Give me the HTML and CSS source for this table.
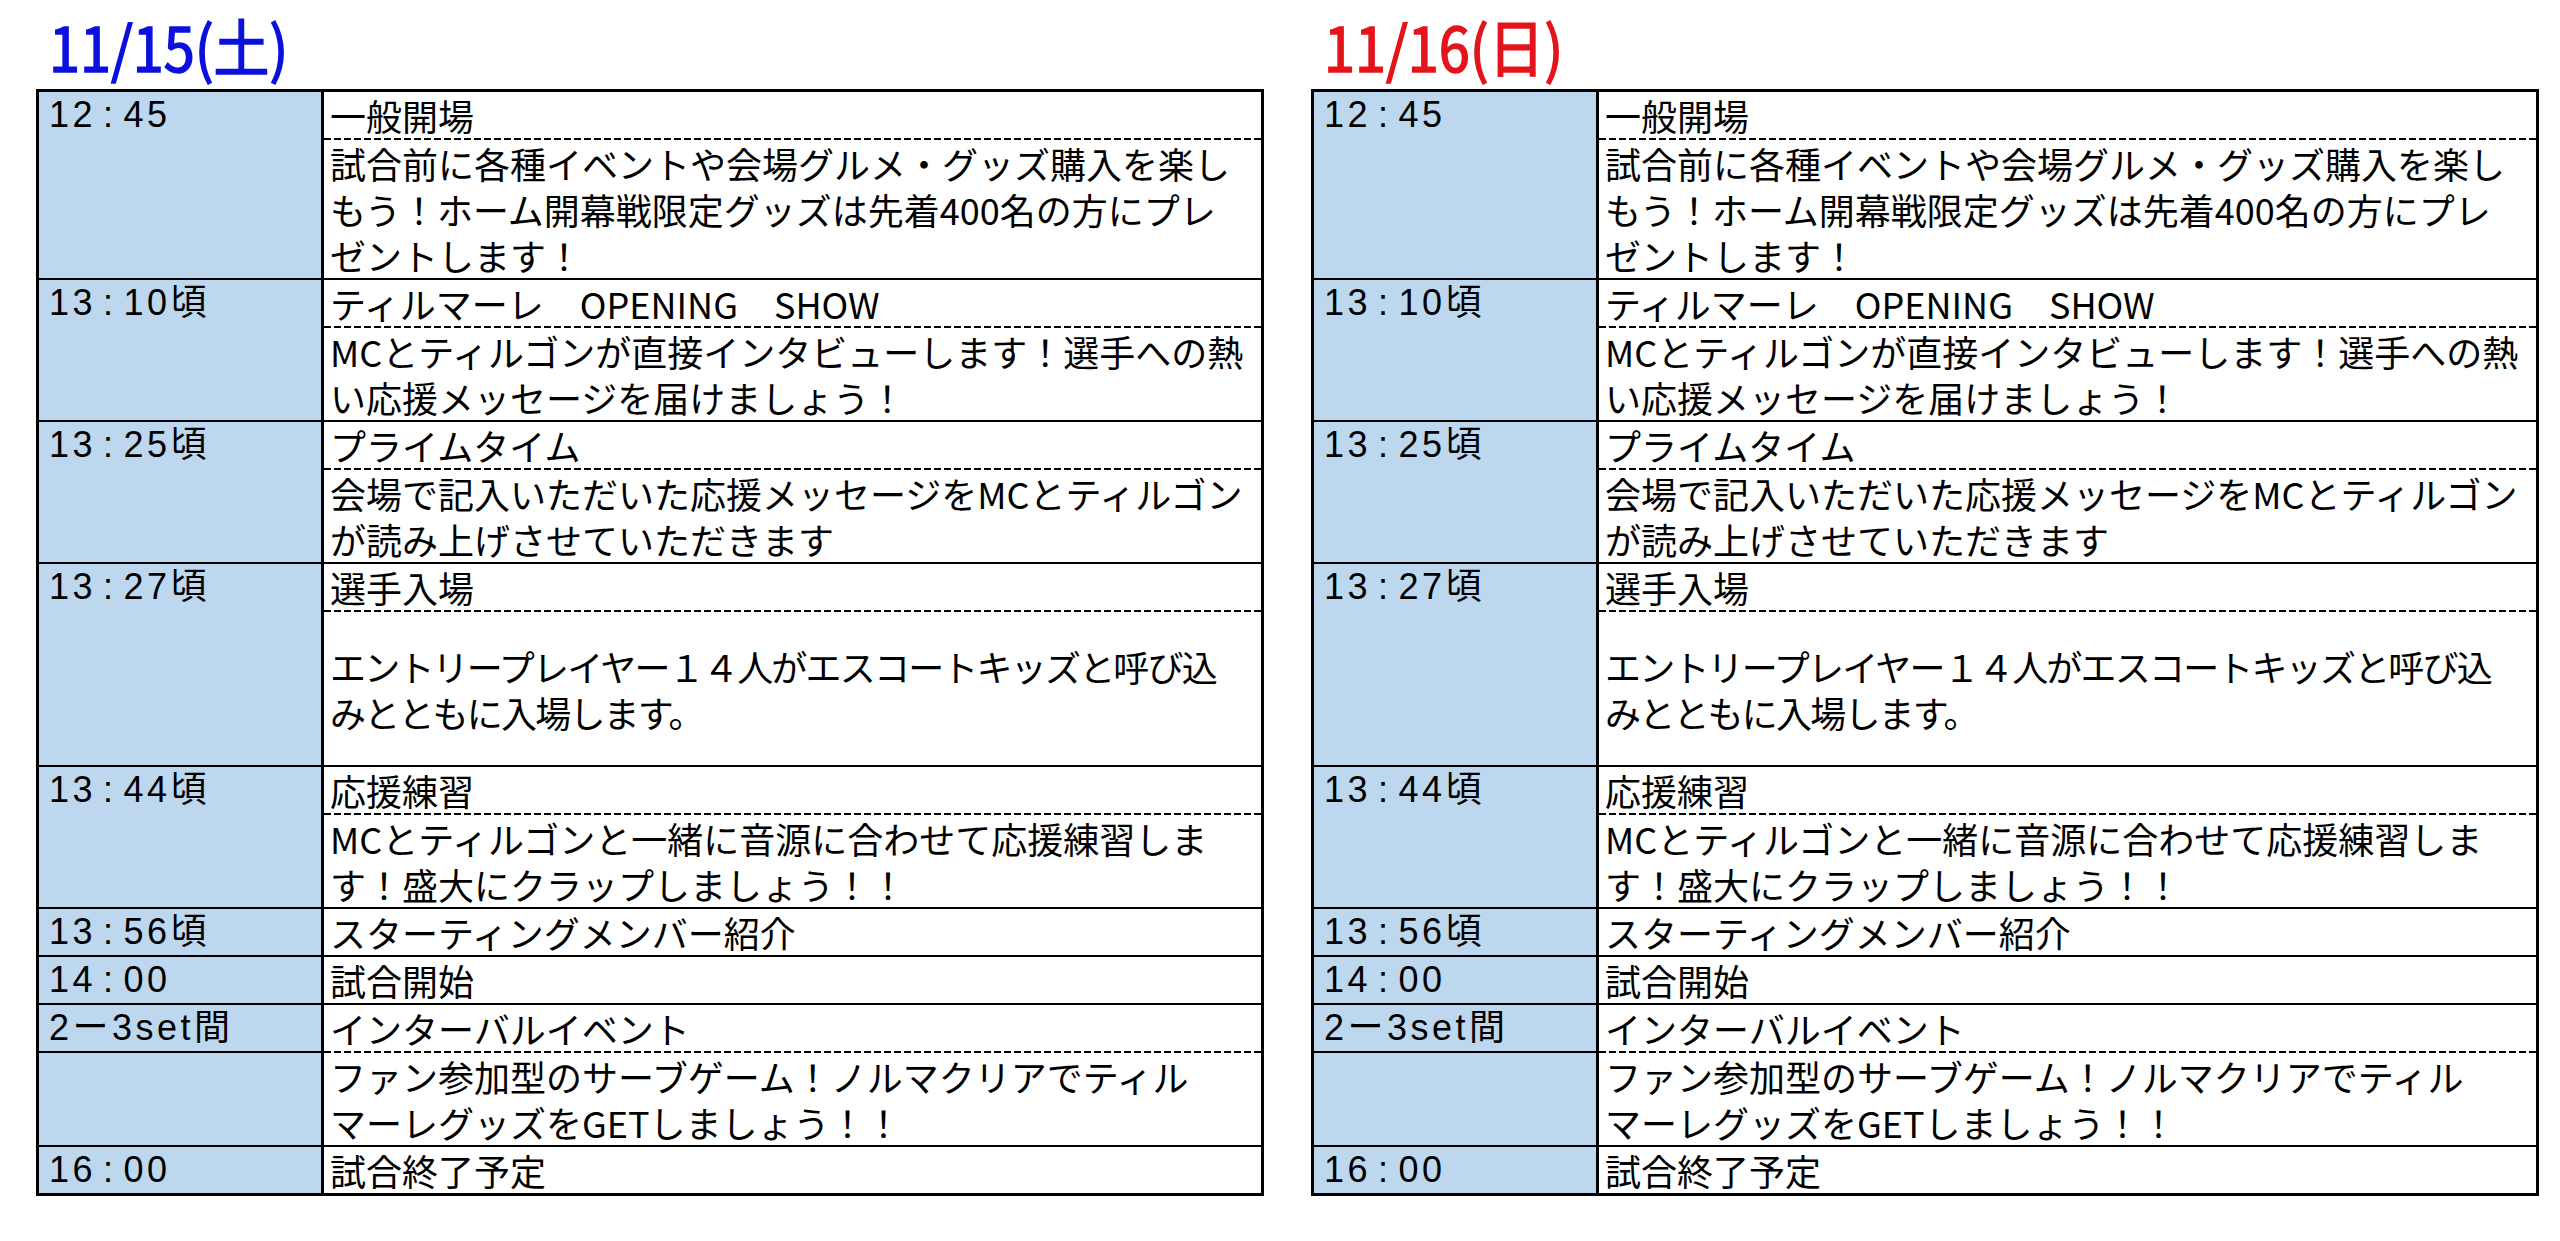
FILE: index.html
```html
<!DOCTYPE html>
<html lang="ja">
<head>
<meta charset="utf-8">
<title>スケジュール</title>
<link rel="stylesheet" href="styles.css">
</head>
<body>
<div class="page">
  <section class="day">
    <h2 class="title sat"><span class="title-text">11/15(土)</span></h2>
    <div class="sched">
      <div class="row">
        <div class="time"><div class="t">12<span class="colon">:</span>45</div></div>
        <div class="event">
          <div class="head">一般開場</div>
          <div class="sub">試合前に各種イベントや会場グルメ・グッズ購入を楽し<br>もう！ホーム開幕戦限定グッズは先着400名の方にプレ<br>ゼントします！</div>
        </div>
      </div>
      <div class="row">
        <div class="time"><div class="t">13<span class="colon">:</span>10頃</div></div>
        <div class="event">
          <div class="head">ティルマーレ　OPENING　SHOW</div>
          <div class="sub">MCとティルゴンが直接インタビューします！選手への熱<br>い応援メッセージを届けましょう！</div>
        </div>
      </div>
      <div class="row">
        <div class="time"><div class="t">13<span class="colon">:</span>25頃</div></div>
        <div class="event">
          <div class="head">プライムタイム</div>
          <div class="sub">会場で記入いただいた応援メッセージをMCとティルゴン<br>が読み上げさせていただきます</div>
        </div>
      </div>
      <div class="row">
        <div class="time"><div class="t">13<span class="colon">:</span>27頃</div></div>
        <div class="event">
          <div class="head">選手入場</div>
          <div class="sub tall"><p class="tight">エントリープレイヤー１４人がエスコートキッズと呼び込<br>みとともに入場します。</p></div>
        </div>
      </div>
      <div class="row">
        <div class="time"><div class="t">13<span class="colon">:</span>44頃</div></div>
        <div class="event">
          <div class="head">応援練習</div>
          <div class="sub">MCとティルゴンと一緒に音源に合わせて応援練習しま<br>す！盛大にクラップしましょう！！</div>
        </div>
      </div>
      <div class="row">
        <div class="time"><div class="t">13<span class="colon">:</span>56頃</div></div>
        <div class="event">
          <div class="head">スターティングメンバー紹介</div>
        </div>
      </div>
      <div class="row">
        <div class="time"><div class="t">14<span class="colon">:</span>00</div></div>
        <div class="event">
          <div class="head">試合開始</div>
        </div>
      </div>
      <div class="row">
        <div class="time"><div class="t">2ー3set間</div><div class="blank"></div></div>
        <div class="event">
          <div class="head">インターバルイベント</div>
          <div class="sub">ファン参加型のサーブゲーム！ノルマクリアでティル<br>マーレグッズをGETしましょう！！</div>
        </div>
      </div>
      <div class="row">
        <div class="time"><div class="t">16<span class="colon">:</span>00</div></div>
        <div class="event">
          <div class="head">試合終了予定</div>
        </div>
      </div>
    </div>
  </section>

  <section class="day">
    <h2 class="title sun"><span class="title-text">11/16(日)</span></h2>
    <div class="sched">
      <div class="row">
        <div class="time"><div class="t">12<span class="colon">:</span>45</div></div>
        <div class="event">
          <div class="head">一般開場</div>
          <div class="sub">試合前に各種イベントや会場グルメ・グッズ購入を楽し<br>もう！ホーム開幕戦限定グッズは先着400名の方にプレ<br>ゼントします！</div>
        </div>
      </div>
      <div class="row">
        <div class="time"><div class="t">13<span class="colon">:</span>10頃</div></div>
        <div class="event">
          <div class="head">ティルマーレ　OPENING　SHOW</div>
          <div class="sub">MCとティルゴンが直接インタビューします！選手への熱<br>い応援メッセージを届けましょう！</div>
        </div>
      </div>
      <div class="row">
        <div class="time"><div class="t">13<span class="colon">:</span>25頃</div></div>
        <div class="event">
          <div class="head">プライムタイム</div>
          <div class="sub">会場で記入いただいた応援メッセージをMCとティルゴン<br>が読み上げさせていただきます</div>
        </div>
      </div>
      <div class="row">
        <div class="time"><div class="t">13<span class="colon">:</span>27頃</div></div>
        <div class="event">
          <div class="head">選手入場</div>
          <div class="sub tall"><p class="tight">エントリープレイヤー１４人がエスコートキッズと呼び込<br>みとともに入場します。</p></div>
        </div>
      </div>
      <div class="row">
        <div class="time"><div class="t">13<span class="colon">:</span>44頃</div></div>
        <div class="event">
          <div class="head">応援練習</div>
          <div class="sub">MCとティルゴンと一緒に音源に合わせて応援練習しま<br>す！盛大にクラップしましょう！！</div>
        </div>
      </div>
      <div class="row">
        <div class="time"><div class="t">13<span class="colon">:</span>56頃</div></div>
        <div class="event">
          <div class="head">スターティングメンバー紹介</div>
        </div>
      </div>
      <div class="row">
        <div class="time"><div class="t">14<span class="colon">:</span>00</div></div>
        <div class="event">
          <div class="head">試合開始</div>
        </div>
      </div>
      <div class="row">
        <div class="time"><div class="t">2ー3set間</div><div class="blank"></div></div>
        <div class="event">
          <div class="head">インターバルイベント</div>
          <div class="sub">ファン参加型のサーブゲーム！ノルマクリアでティル<br>マーレグッズをGETしましょう！！</div>
        </div>
      </div>
      <div class="row">
        <div class="time"><div class="t">16<span class="colon">:</span>00</div></div>
        <div class="event">
          <div class="head">試合終了予定</div>
        </div>
      </div>
    </div>
  </section>
</div>
</body>
</html>
```

FILE: styles.css
```css
html, body {
  margin: 0;
  padding: 0;
  background: #ffffff;
}

body {
  font-family: "Noto Sans CJK JP", sans-serif;
  color: #000000;
}

.page {
  display: flex;
  gap: 47px;
  padding-left: 36px;
}

.day {
  width: 1228px;
  flex: none;
}

.title {
  margin: 0;
  height: 89px;
  box-sizing: border-box;
  padding: 14px 0 0 13px;
  font-size: 62px;
  line-height: 62px;
  font-weight: 400;
  white-space: nowrap;
}

.title-text {
  display: inline-block;
  transform: scaleX(0.9);
  transform-origin: left center;
  -webkit-text-stroke: 1.6px currentColor;
}

.title.sat { color: #0c10dc; }
.title.sun { color: #e3141b; }

.sched {
  border: 3px solid #000000;
}

.row {
  display: grid;
  grid-template-columns: 285px minmax(0, 1fr);
  border-top: 2px solid #000000;
}

.row:first-child {
  border-top: 0;
}

.time {
  background: #bdd7ee;
  border-right: 3px solid #000000;
  display: flex;
  flex-direction: column;
}

.time .t {
  height: 46px;
  padding-left: 10px;
  font-family: "Liberation Sans", "Noto Sans CJK JP", sans-serif;
  font-size: 36px;
  line-height: 46px;
  letter-spacing: 3.5px;
  white-space: nowrap;
}

.time .colon {
  margin: 0 7px;
}

.time .blank {
  flex: 1;
  border-top: 2px solid #000000;
}

.event {
  min-width: 0;
  font-size: 36px;
  line-height: 46px;
  white-space: nowrap;
}

.head {
  height: 46px;
  padding-left: 6px;
}

.sub {
  padding: 2px 0 0 6px;
  background-image: repeating-linear-gradient(90deg, #000000 0 7px, transparent 7px 10px);
  background-size: 100% 2px;
  background-repeat: no-repeat;
  background-position: left top;
}

.sub.tall {
  height: 155px;
  box-sizing: border-box;
  display: flex;
  align-items: center;
}

.sub.tall p {
  margin: 0;
}

.tight {
  letter-spacing: -1.8px;
}
```
